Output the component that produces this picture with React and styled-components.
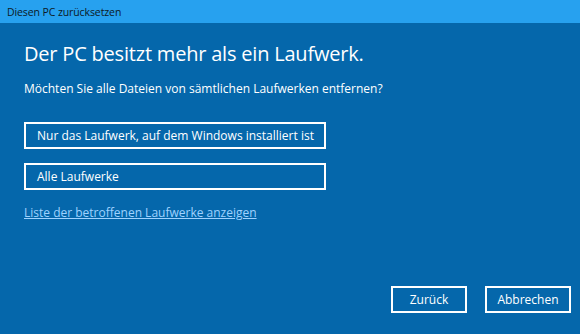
import React from "react";
import styled, { createGlobalStyle } from "styled-components";

const GlobalStyle = createGlobalStyle`
  html, body {
    margin: 0;
    padding: 0;
    background: #0567ab;
  }
  * {
    box-sizing: border-box;
  }
`;

const Window = styled.div`
  width: 580px;
  height: 334px;
  display: flex;
  flex-direction: column;
  background: #0567ab;
  color: #ffffff;
  font-family: "Open Sans", "Noto Sans", sans-serif;
  overflow: hidden;
`;

const TitleBar = styled.div`
  height: 23px;
  flex: none;
  display: flex;
  align-items: center;
  padding-left: 7px;
  background: #27a1ef;
  color: #0d1a26;
  font-size: 10.5px;
  letter-spacing: -0.1px;
`;

const Content = styled.div`
  flex: 1;
  display: flex;
  flex-direction: column;
  padding: 17px 24px 0;
`;

const Heading = styled.h1`
  margin: 0;
  font-size: 20px;
  font-weight: 400;
  line-height: 28px;
  letter-spacing: -0.2px;
`;

const Question = styled.p`
  margin: 12px 0 0;
  font-size: 12px;
  line-height: 18px;
`;

const Options = styled.div`
  display: flex;
  flex-direction: column;
  gap: 14px;
  margin-top: 24px;
`;

const OptionButton = styled.button`
  width: 302px;
  height: 27px;
  padding: 0 0 1px 11px;
  display: flex;
  align-items: center;
  background: transparent;
  border: 2px solid #ffffff;
  color: #ffffff;
  font-family: inherit;
  font-size: 12px;
  text-align: left;
  cursor: pointer;
`;

const Link = styled.a`
  margin-top: 14px;
  align-self: flex-start;
  color: #9fd2ff;
  font-size: 12px;
  line-height: 18px;
  text-decoration: underline;
  cursor: pointer;
`;

const Footer = styled.div`
  display: flex;
  justify-content: flex-end;
  gap: 18px;
  padding: 0 9px 21px 0;
`;

const DialogButton = styled.button`
  width: ${(p) => p.$w}px;
  height: 27px;
  padding: 0 0 1px;
  background: transparent;
  border: 2px solid #ffffff;
  color: #ffffff;
  font-family: inherit;
  font-size: 12px;
  cursor: pointer;
`;

export default function App() {
  return (
    <>
      <GlobalStyle />
      <Window>
        <TitleBar>Diesen PC zurücksetzen</TitleBar>
        <Content>
          <Heading>Der PC besitzt mehr als ein Laufwerk.</Heading>
          <Question>Möchten Sie alle Dateien von sämtlichen Laufwerken entfernen?</Question>
          <Options>
            <OptionButton>Nur das Laufwerk, auf dem Windows installiert ist</OptionButton>
            <OptionButton>Alle Laufwerke</OptionButton>
          </Options>
          <Link>Liste der betroffenen Laufwerke anzeigen</Link>
        </Content>
        <Footer>
          <DialogButton $w={76}>Zurück</DialogButton>
          <DialogButton $w={86}>Abbrechen</DialogButton>
        </Footer>
      </Window>
    </>
  );
}
